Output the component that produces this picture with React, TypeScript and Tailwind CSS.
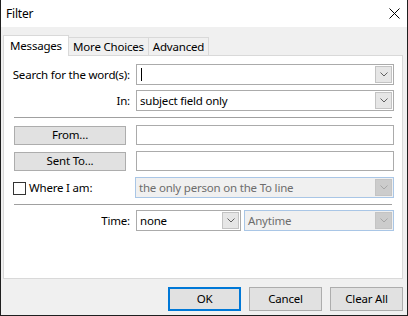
import React from 'react';

const Chevron = ({ disabled }: { disabled?: boolean }) => (
  <svg width="8" height="5" viewBox="0 0 8 5" className="block">
    <path d="M0.5 0.5 L4 4 L7.5 0.5" fill="none" stroke={disabled ? '#a6a6a6' : '#606060'} strokeWidth="1" />
  </svg>
);

interface ComboProps {
  value?: string;
  disabled?: boolean;
  cursor?: boolean;
  className?: string;
}

const Combo = ({ value, disabled, cursor, className = '' }: ComboProps) => (
  <div
    className={`flex items-stretch border ${
      disabled ? 'border-[#a9c6e6] bg-[#f0f0f0] text-[#6d6d6d]' : 'border-[#ababab] bg-white text-black'
    } ${className}`}
  >
    <div className="flex-1 flex items-center pl-[3px] whitespace-nowrap overflow-hidden">
      {cursor && <div className="w-px h-[13px] bg-black ml-[1px]" />}
      {value}
    </div>
    <div
      className={`w-[17px] m-px flex items-center justify-center border ${
        disabled ? 'border-[#c4c4c4] bg-[#cccccc]' : 'border-[#c3c3c3] bg-[#e6e6e6]'
      }`}
    >
      <Chevron disabled={disabled} />
    </div>
  </div>
);

const Button = ({ label, className = '' }: { label: string; className?: string }) => (
  <div className={`flex items-center justify-center bg-[#e1e1e1] border border-[#adadad] text-black ${className}`}>
    {label}
  </div>
);

export default function App() {
  return (
    <div
      className="w-[408px] h-[316px] flex flex-col border-x border-b border-[#1f1f1f] bg-[#f0f0f0] text-[11.5px] tracking-[-0.2px] text-black overflow-hidden whitespace-nowrap"
      style={{ fontFamily: '"Noto Sans", sans-serif' }}
    >
      {/* title bar */}
      <div className="h-[27px] bg-white flex items-center justify-between pl-[5px] pr-[6px] text-[12px]">
        <span>Filter</span>
        <svg width="11" height="11" viewBox="0 0 11 11" className="mr-[1px]">
          <path d="M0.5 0.5 L10.5 10.5 M10.5 0.5 L0.5 10.5" stroke="#000" strokeWidth="1" />
        </svg>
      </div>

      {/* tabs */}
      <div className="flex items-end pl-[2px] pt-[7px] h-[28px]">
        <div className="relative z-10 w-[66px] h-[21px] -mb-px bg-white border border-b-0 border-[#d9d9d9] flex items-center justify-center">
          Messages
        </div>
        <div className="w-[81px] h-[18px] -ml-px bg-[#f0f0f0] border border-b-0 border-[#d9d9d9] flex items-center justify-center">
          More Choices
        </div>
        <div className="w-[61px] h-[18px] -ml-px bg-[#f0f0f0] border border-b-0 border-[#d9d9d9] flex items-center justify-center">
          Advanced
        </div>
      </div>

      {/* panel */}
      <div className="ml-[2px] w-[400px] h-[224px] bg-white border border-[#d9d9d9] pt-[8px] pl-[10px] pr-[8px] flex flex-col">
        <div className="flex h-[21px]">
          <div className="w-[122px] flex items-center justify-end pr-[6px]">Search for the word(s):</div>
          <Combo cursor className="flex-1" />
        </div>
        <div className="flex h-[21px] mt-[5px]">
          <div className="w-[122px] flex items-center justify-end pr-[6px]">In:</div>
          <Combo value="subject field only" className="flex-1" />
        </div>

        <div className="h-px bg-[#a0a0a0] mt-[6px] mr-[2px]" />

        <div className="flex h-[20px] mt-[7px]">
          <div className="w-[122px] flex items-center">
            <Button label="From..." className="w-[112px] h-[19px]" />
          </div>
          <div className="flex-1 border border-[#ababab] bg-white" />
        </div>
        <div className="flex h-[20px] mt-[6px]">
          <div className="w-[122px] flex items-center">
            <Button label="Sent To..." className="w-[112px] h-[19px]" />
          </div>
          <div className="flex-1 border border-[#ababab] bg-white" />
        </div>
        <div className="flex h-[21px] mt-[6px]">
          <div className="w-[122px] flex items-center -ml-px">
            <div className="w-[13px] h-[13px] border border-[#333333] bg-white mt-[2px]" />
            <span className="ml-[3px]">Where I am:</span>
          </div>
          <Combo disabled value="the only person on the To line" className="flex-1" />
        </div>

        <div className="h-px bg-[#a0a0a0] mt-[6px] mr-[2px]" />

        <div className="flex h-[21px] mt-[5px]">
          <div className="w-[122px] flex items-center justify-end pr-[6px]">Time:</div>
          <Combo value="none" className="w-[105px]" />
          <Combo disabled value="Anytime" className="flex-1 ml-[3px]" />
        </div>
      </div>

      {/* buttons */}
      <div className="flex justify-end gap-[8px] mt-[8px] pr-[4px]">
        <div className="w-[73px] h-[24px] flex items-center justify-center bg-[#e1e1e1] border-2 border-[#0078d7]">
          OK
        </div>
        <Button label="Cancel" className="w-[73px] h-[24px]" />
        <Button label="Clear All" className="w-[73px] h-[24px]" />
      </div>
    </div>
  );
}
